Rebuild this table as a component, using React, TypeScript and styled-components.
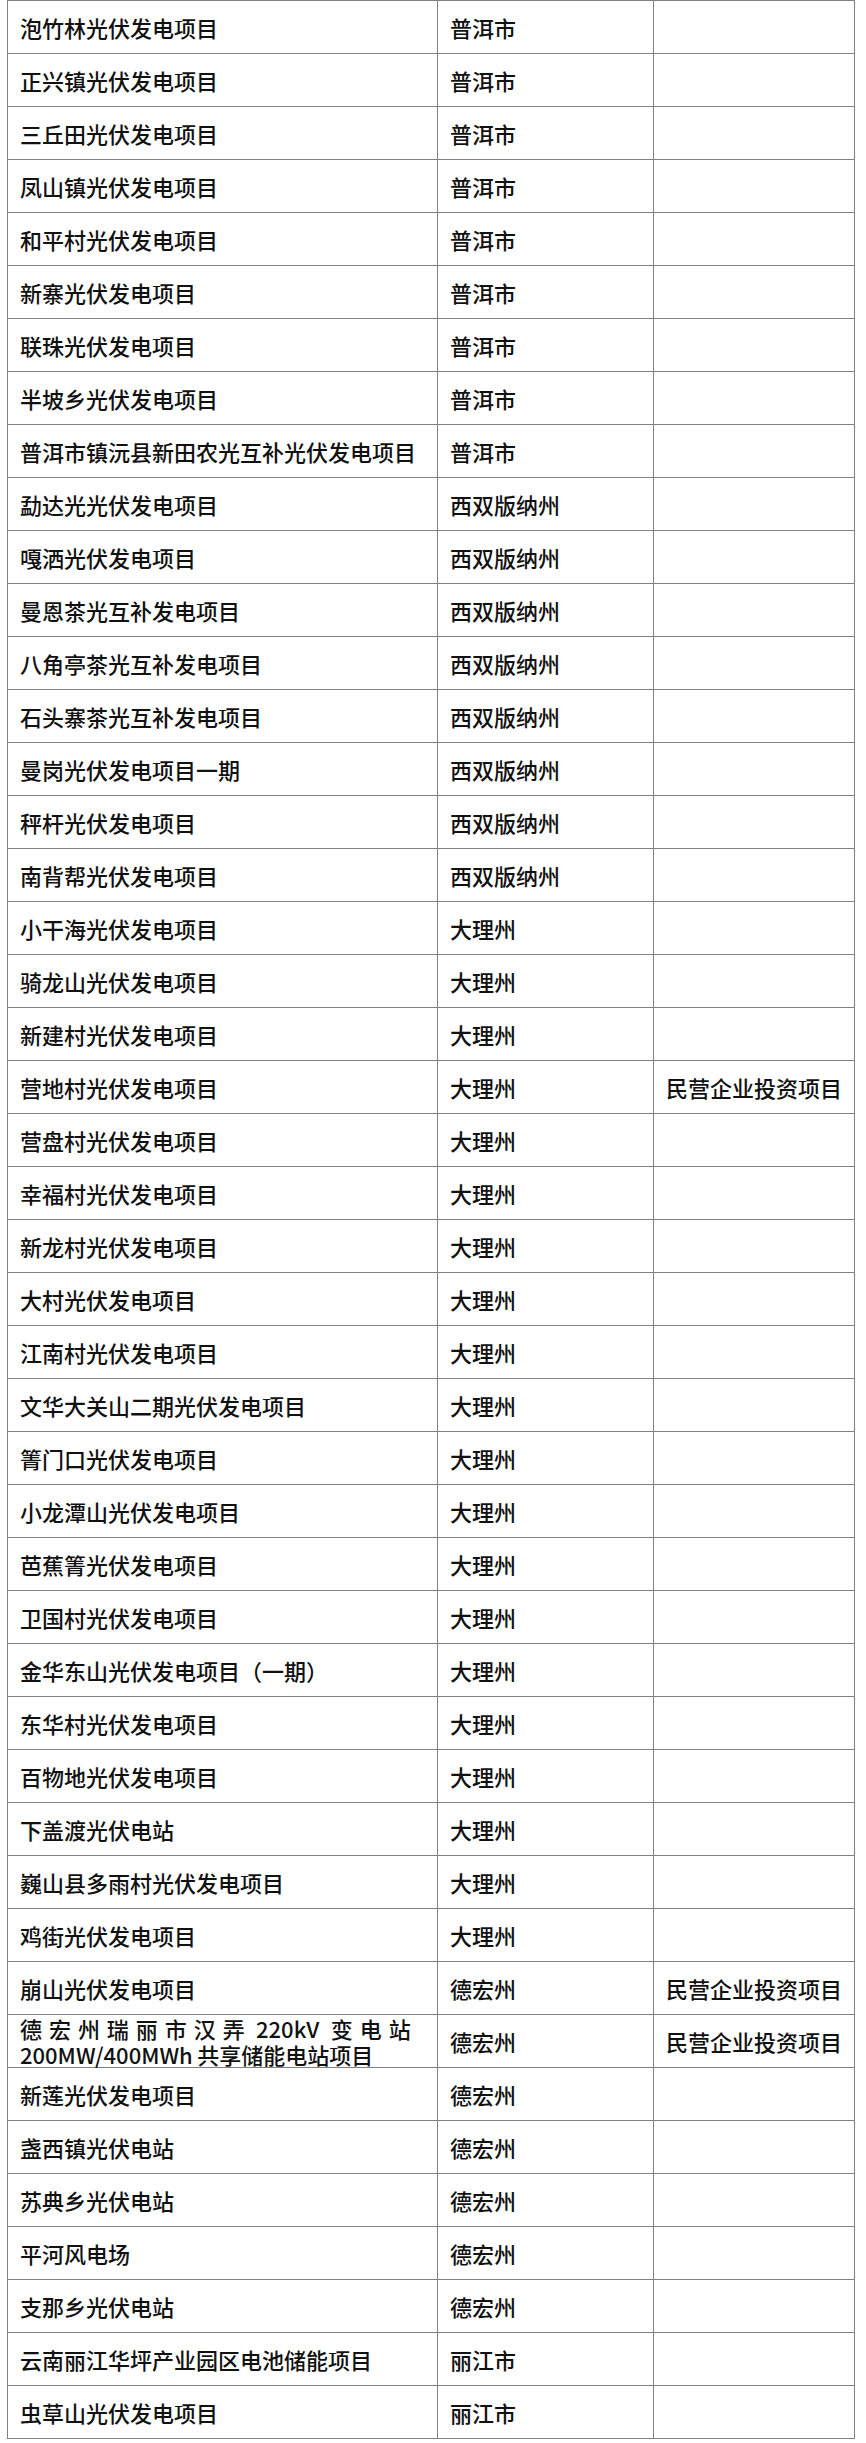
import React from "react";
import styled, { createGlobalStyle } from "styled-components";

const GlobalStyle = createGlobalStyle`
  html, body {
    margin: 0;
    padding: 0;
    background: #ffffff;
  }
  body {
    font-family: "Noto Sans CJK SC", "Liberation Sans", sans-serif;
  }
`;

const Page = styled.div`
  padding: 0 0 0 7px;
  background: #ffffff;
`;

const Table = styled.table`
  width: 847px;
  border-collapse: collapse;
  table-layout: fixed;
  color: #111111;
`;

// fixed column widths: name / region / note
const Col = styled.col<{ $w: number }>`
  width: ${(p) => p.$w}px;
`;

const Cell = styled.td<{ $multi?: boolean }>`
  height: 52px;
  padding: ${(p) => (p.$multi ? "0 15px 0 12px" : "0 12px")};
  border: 1px solid #808080;
  font-size: 22px;
  font-weight: 500;
  line-height: 26px;
  text-align: ${(p) => (p.$multi ? "justify" : "left")};
  vertical-align: middle;
  white-space: ${(p) => (p.$multi ? "normal" : "nowrap")};
`;

type Row = [string, string, string?];

const NOTE = "民营企业投资项目";

const rows: Row[] = [
  ["泡竹林光伏发电项目", "普洱市"],
  ["正兴镇光伏发电项目", "普洱市"],
  ["三丘田光伏发电项目", "普洱市"],
  ["凤山镇光伏发电项目", "普洱市"],
  ["和平村光伏发电项目", "普洱市"],
  ["新寨光伏发电项目", "普洱市"],
  ["联珠光伏发电项目", "普洱市"],
  ["半坡乡光伏发电项目", "普洱市"],
  ["普洱市镇沅县新田农光互补光伏发电项目", "普洱市"],
  ["勐达光光伏发电项目", "西双版纳州"],
  ["嘎洒光伏发电项目", "西双版纳州"],
  ["曼恩茶光互补发电项目", "西双版纳州"],
  ["八角亭茶光互补发电项目", "西双版纳州"],
  ["石头寨茶光互补发电项目", "西双版纳州"],
  ["曼岗光伏发电项目一期", "西双版纳州"],
  ["秤杆光伏发电项目", "西双版纳州"],
  ["南背帮光伏发电项目", "西双版纳州"],
  ["小干海光伏发电项目", "大理州"],
  ["骑龙山光伏发电项目", "大理州"],
  ["新建村光伏发电项目", "大理州"],
  ["营地村光伏发电项目", "大理州", NOTE],
  ["营盘村光伏发电项目", "大理州"],
  ["幸福村光伏发电项目", "大理州"],
  ["新龙村光伏发电项目", "大理州"],
  ["大村光伏发电项目", "大理州"],
  ["江南村光伏发电项目", "大理州"],
  ["文华大关山二期光伏发电项目", "大理州"],
  ["箐门口光伏发电项目", "大理州"],
  ["小龙潭山光伏发电项目", "大理州"],
  ["芭蕉箐光伏发电项目", "大理州"],
  ["卫国村光伏发电项目", "大理州"],
  ["金华东山光伏发电项目（一期）", "大理州"],
  ["东华村光伏发电项目", "大理州"],
  ["百物地光伏发电项目", "大理州"],
  ["下盖渡光伏电站", "大理州"],
  ["巍山县多雨村光伏发电项目", "大理州"],
  ["鸡街光伏发电项目", "大理州"],
  ["崩山光伏发电项目", "德宏州", NOTE],
  // thin spaces so justification spreads over the ideographs, not the gaps
  ["德宏州瑞丽市汉弄\u2009220kV\u2009变电站\u2009200MW/400MWh\u2009共享储能电站项目", "德宏州", NOTE],
  ["新莲光伏发电项目", "德宏州"],
  ["盏西镇光伏电站", "德宏州"],
  ["苏典乡光伏电站", "德宏州"],
  ["平河风电场", "德宏州"],
  ["支那乡光伏电站", "德宏州"],
  ["云南丽江华坪产业园区电池储能项目", "丽江市"],
  ["虫草山光伏发电项目", "丽江市"],
];

const App: React.FC = () => {
  return (
    <>
      <GlobalStyle />
      <Page>
        <Table>
          <colgroup>
            <Col $w={430} />
            <Col $w={216} />
            <Col $w={201} />
          </colgroup>
          <tbody>
            {rows.map(([name, region, note], index) => (
              <tr key={index}>
                <Cell $multi={name.length > 22}>{name}</Cell>
                <Cell>{region}</Cell>
                <Cell>{note ?? ""}</Cell>
              </tr>
            ))}
          </tbody>
        </Table>
      </Page>
    </>
  );
};

export default App;
